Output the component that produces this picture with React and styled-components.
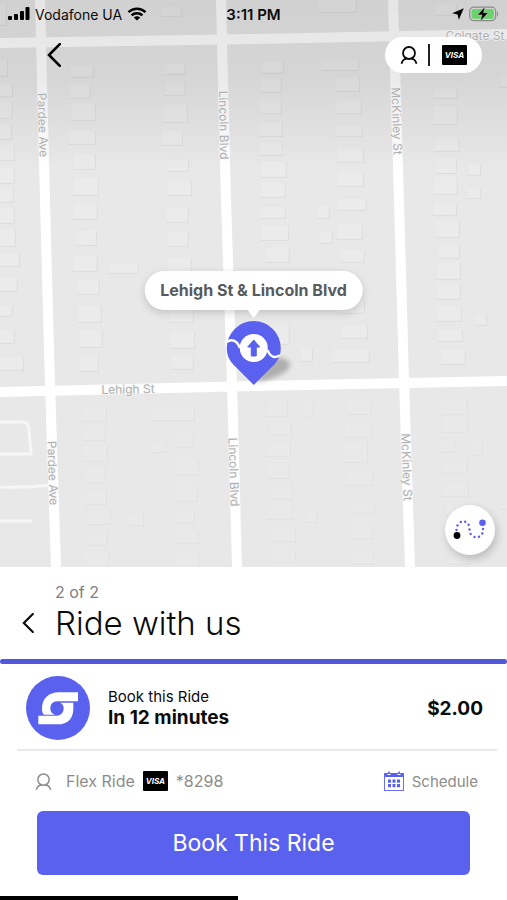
import React from 'react';
import styled, { createGlobalStyle } from 'styled-components';

const BLUE = '#5a61ee';

const roads = [
  'M40 0 L45 200 L50 385 L56 567',
  'M221 0 L226 200 L232 385 L237 567',
  'M393 0 L399 200 L404 380 L410 567',
  'M0 43 L254 39 L507 34',
  'M0 392 L254 386 L507 381',
];

const paths = [
  'M0 422 H22 Q29 422 29 430 L31 454 H0',
  'M0 487 Q25 488 50 485',
  'M0 521 H32',
];

// x, y, width, height
const buildings = [
  [-6, 4, 12, 21], [-8, 60, 15, 16], [-8, 84, 20, 12], [-8, 102, 20, 16], [-8, 124, 19, 15],
  [-8, 144, 22, 16], [-8, 168, 22, 15], [-8, 188, 21, 14], [-8, 208, 22, 15], [-8, 229, 23, 17],
  [-8, 253, 27, 13], [-8, 277, 25, 14], [-8, 305, 20, 11], [-8, 330, 22, 13], [-8, 357, 31, 13],
  [70, 65, 23, 12], [69, 84, 21, 14], [71, 103, 24, 17], [68, 130, 27, 14], [73, 153, 22, 16],
  [73, 178, 25, 17], [73, 204, 24, 15], [75, 230, 21, 15], [73, 255, 24, 16], [76, 280, 23, 14],
  [78, 305, 23, 17], [79, 330, 23, 17], [80, 356, 18, 15], [108, 264, 30, 9],
  [163, 64, 22, 10], [165, 81, 20, 14], [163, 104, 24, 18], [162, 130, 20, 15], [167, 159, 21, 12],
  [168, 180, 23, 15], [166, 207, 22, 15], [168, 231, 20, 15], [167, 258, 24, 14], [169, 305, 24, 17],
  [170, 331, 24, 17], [171, 355, 22, 14],
  [82, 406, 24, 15], [83, 425, 22, 15], [83, 445, 24, 16], [84, 466, 21, 17], [84, 490, 22, 14],
  [86, 510, 24, 14], [86, 532, 21, 13], [82, 552, 26, 16], [127, 514, 16, 11],
  [150, 406, 44, 14], [151, 442, 15, 10], [173, 433, 20, 14], [175, 459, 23, 16], [176, 485, 21, 16],
  [174, 508, 20, 15], [176, 531, 22, 12], [176, 551, 22, 16],
  [161, 6, 20, 10], [261, 61, 22, 12], [260, 78, 21, 14], [259, 99, 22, 14], [259, 122, 23, 14],
  [259, 142, 23, 13], [260, 161, 26, 16], [260, 182, 25, 15], [259, 206, 26, 12], [261, 225, 27, 15],
  [265, 247, 24, 15], [264, 324, 25, 20], [300, 347, 12, 14],
  [318, -2, 38, 14], [322, 60, 36, 10], [335, 77, 24, 14], [336, 98, 25, 15], [335, 125, 27, 11],
  [337, 147, 26, 15], [338, 172, 25, 14], [338, 198, 28, 12], [337, 223, 25, 16], [340, 250, 24, 12],
  [340, 300, 24, 13], [341, 325, 26, 13], [331, 349, 38, 13], [317, 205, 12, 13], [319, 231, 13, 12],
  [433, 88, 24, 10], [433, 106, 24, 18], [434, 138, 25, 13], [435, 158, 21, 15], [434, 176, 23, 18],
  [433, 203, 23, 12], [435, 220, 24, 17], [438, 244, 21, 14], [436, 262, 24, 17], [436, 284, 24, 15],
  [436, 306, 25, 15], [438, 329, 24, 12], [441, 349, 24, 15], [468, 163, 12, 12], [467, 188, 13, 10],
  [475, 314, 11, 11], [434, 3, 22, 12], [500, 74, 12, 13],
  [266, 401, 21, 15], [269, 421, 22, 14], [266, 442, 24, 14], [267, 463, 22, 15], [270, 484, 22, 15],
  [267, 505, 25, 14], [270, 528, 25, 13], [272, 549, 23, 13], [302, 403, 11, 14], [306, 512, 10, 10],
  [347, 400, 24, 14], [345, 424, 26, 13], [342, 442, 25, 20], [346, 472, 26, 13], [350, 500, 24, 13],
  [350, 525, 22, 13], [351, 550, 22, 14],
  [440, 398, 27, 16], [443, 416, 24, 16], [440, 439, 14, 13], [469, 443, 13, 12], [441, 460, 26, 13],
  [442, 482, 26, 14], [445, 502, 9, 14], [499, 500, 10, 9], [448, 550, 20, 14],
];

const streetLabels = [
  { name: 'Pardee Ave', x: 43, y: 125, angle: 88 },
  { name: 'Lincoln Blvd', x: 224, y: 125, angle: 89 },
  { name: 'McKinley St', x: 397, y: 121, angle: 88 },
  { name: 'Pardee Ave', x: 53, y: 473, angle: 88 },
  { name: 'Lincoln Blvd', x: 234, y: 472, angle: 88 },
  { name: 'McKinley St', x: 407, y: 467, angle: 88 },
  { name: 'Lehigh St', x: 128, y: 389, angle: -1 },
  { name: 'Colgate St', x: 475, y: 35, angle: 0 },
];

const GlobalStyle = createGlobalStyle`
  * {
    box-sizing: border-box;
  }
  body {
    margin: 0;
    background: #fff;
    color: #0b0b0b;
    font-family: Inter, 'Liberation Sans', sans-serif;
  }
  button {
    border: 0;
    padding: 0;
    background: none;
    color: inherit;
    font: inherit;
    cursor: pointer;
  }
  svg {
    display: block;
  }
`;

const StreetMap = () => (
  <MapDrawing viewBox="0 0 507 567" preserveAspectRatio="xMidYMid slice">
    <defs>
      <linearGradient id="shade" x1="0" y1="0" x2="0" y2="1">
        <stop offset="0" stopColor="#000" stopOpacity="0.1" />
        <stop offset="0.45" stopColor="#000" stopOpacity="0.08" />
        <stop offset="1" stopColor="#000" stopOpacity="0" />
      </linearGradient>
    </defs>
    <rect width="507" height="567" fill="#e8e8e8" />
    {buildings.map(([x, y, width, height]) => (
      <g key={`${x}-${y}`} opacity={y > 390 ? 0.55 : 1}>
        <rect x={x} y={y + 1} width={width + 1} height={height} fill="#dcdcdc" />
        <rect x={x} y={y} width={width} height={height} fill="#ebebeb" stroke="#e3e3e3" strokeWidth="0.5" />
      </g>
    ))}
    <g fill="none" stroke="#f6f6f6" strokeWidth="3">
      {paths.map((d) => (
        <path key={d} d={d} />
      ))}
    </g>
    <g fill="none" stroke="#fff" strokeWidth="10">
      {roads.map((d) => (
        <path key={d} d={d} />
      ))}
    </g>
    <rect width="507" height="170" fill="url(#shade)" />
    {streetLabels.map(({ name, x, y, angle }) => (
      <StreetName key={`${name}-${y}`} x={x} y={y} transform={`rotate(${angle} ${x} ${y})`}>
        {name}
      </StreetName>
    ))}
  </MapDrawing>
);

const SignalIcon = () => (
  <svg width="22" height="14" viewBox="0 0 22 14">
    <rect x="0" y="9" width="4" height="4" rx="1" />
    <rect x="6" y="7" width="4" height="6" rx="1" />
    <rect x="12" y="4" width="4" height="9" rx="1" />
    <rect x="17.500" y="0" width="4" height="13" rx="1" />
  </svg>
);

const WifiIcon = () => (
  <svg width="20" height="14" viewBox="0 0 20 14">
    <g fill="none" stroke="#000" strokeWidth="2.500">
      <path d="M1.500 5.200 C6.300 0.600 13.700 0.600 18.500 5.200" />
      <path d="M4.600 8.300 C7.600 5.500 12.400 5.500 15.400 8.300" />
    </g>
    <path d="M6.800 10.400 C8.600 8.900 11.400 8.900 13.200 10.400 L10 13.600 Z" />
  </svg>
);

const BatteryIcon = () => (
  <svg width="30" height="16" viewBox="0 0 30 16">
    <rect x="0.700" y="1.200" width="26" height="13.400" rx="4" fill="none" stroke="#8b8b8b" strokeWidth="1.200" />
    <path d="M28 5.500 Q30.500 8 28 10.500 Z" fill="#8b8b8b" />
    <rect x="2.600" y="3" width="22.200" height="9.800" rx="2.400" fill="#69d26b" />
    <path d="M16 0.500 L8.500 9 H13 L11.200 15.600 L19.200 6.700 H14.600 Z" stroke="#d9d9d9" strokeWidth="0.500" />
  </svg>
);

const ChevronIcon = ({ width, height }) => (
  <svg width={width} height={height} viewBox="0 0 14 24" fill="none" stroke="currentColor" strokeWidth="2.600">
    <path d="M12.800 1.200 L2 12 L12.800 22.800" strokeLinecap="round" />
  </svg>
);

const PersonIcon = ({ size, stroke }) => (
  <svg width={size} height={size} viewBox="0 0 18 18" fill="none" stroke="currentColor" strokeWidth={stroke}>
    <circle cx="9" cy="7" r="6" />
    <path d="M1.500 17.800 C2.200 14.800 4.200 13 6.700 12.700 M11.300 12.700 C13.800 13 15.800 14.800 16.500 17.800" />
  </svg>
);

const PinIcon = () => (
  <svg width="84" height="66" viewBox="0 0 84 66">
    <defs>
      <filter id="soft" x="-30%" y="-30%" width="160%" height="160%">
        <feGaussianBlur stdDeviation="2.600" />
      </filter>
    </defs>
    <path d="M43 63 C54 61 76 54 78 46 C79 40 70 36 62 38 Z" fill="#000" opacity="0.25" filter="url(#soft)" />
    <path d="M42 65 L22 45 C17 40 15 34 15 28 A27 27 0 0 1 69 28 C69 34 67 40 62 45 Z" fill={BLUE} />
    <path
      d="M15 22 C20 18 26 21 28 28 M56 30 C58 37 64 39 68 35"
      fill="none"
      stroke="#fff"
      strokeWidth="2.400"
    />
    <circle cx="42" cy="28" r="14" fill="#fff" />
    <path d="M42 20 L48 27 H44.500 V36 H39.500 V27 H36 Z" fill={BLUE} stroke={BLUE} strokeLinejoin="round" />
  </svg>
);

const RouteIcon = () => (
  <svg width="34" height="24" viewBox="0 0 34 24">
    <g fill={BLUE}>
      <circle cx="3.500" cy="12" r="1.200" />
      <circle cx="4.500" cy="7.500" r="1.200" />
      <circle cx="7.800" cy="4" r="1.200" />
      <circle cx="12.200" cy="3.800" r="1.200" />
      <circle cx="15.600" cy="6.800" r="1.200" />
      <circle cx="16.500" cy="11.500" r="1.200" />
      <circle cx="17.600" cy="16" r="1.200" />
      <circle cx="21.500" cy="19" r="1.200" />
      <circle cx="26" cy="18.800" r="1.200" />
      <circle cx="29.300" cy="15.500" r="1.200" />
      <circle cx="30" cy="11" r="1.200" />
      <circle cx="29.500" cy="4.800" r="3.300" />
    </g>
    <circle cx="4" cy="17.500" r="3.400" />
  </svg>
);

const BrandIcon = () => (
  <svg width="64" height="64" viewBox="0 0 192 192">
    <circle cx="96" cy="96" r="96" fill={BLUE} />
    <g fill="#fff">
      <path d="M156 49 H98 C68 49 48 68 48 98 C48 106 50 112 54 116 H88 C80 116 73 108 73 97 C73 86 80 76 94 76 H156 Z" />
      <path d="M37 119 H92 C106 119 113 108 113 97 C113 86 106 80 98 80 H142 V98 C142 127 125 145 96 145 H37 Z" />
    </g>
  </svg>
);

const CalendarIcon = () => (
  <svg width="20" height="20" viewBox="0 0 20 20" fill={BLUE}>
    <path d="M0.500 2 H3.500 V4 H6.500 V2 H13.500 V4 H16.500 V2 H19.500 V6 H0.500 Z" />
    <path d="M4.200 0.500 H5.800 V3 H4.200 Z M14.200 0.500 H15.800 V3 H14.200 Z" />
    <rect x="0.500" y="2.500" width="19" height="17" fill="none" stroke={BLUE} strokeWidth="0.900" />
    {[8.5, 13].map((y) =>
      [4, 8.5, 13].map((x) => (
        <rect key={`${x}-${y}`} x={x} y={y} width="3" height="3.200" />
      ))
    )}
  </svg>
);

const App = () => {
  return (
    <Screen>
      <GlobalStyle />
      <MapPanel>
        <StreetMap />
        <StatusBar>
          <StatusGroup>
            <SignalIcon />
            <span>Vodafone UA</span>
            <WifiIcon />
          </StatusGroup>
          <Clock>3:11 PM</Clock>
          <StatusGroup $end>
            <svg width="12" height="12" viewBox="0 0 12 12">
              <path d="M11.800 0.200 L6.800 11.800 L5.600 6.400 L0.200 5.200 Z" />
            </svg>
            <BatteryIcon />
          </StatusGroup>
        </StatusBar>
        <MapNav>
          <BackButton aria-label="Back">
            <ChevronIcon width={14} height={24} />
          </BackButton>
          <ProfileButton aria-label="Profile and payment">
            <PersonIcon size={18} stroke={1.8} />
            <PillDivider />
            <VisaCard>VISA</VisaCard>
          </ProfileButton>
        </MapNav>
        <Marker>
          <Callout>Lehigh St &amp; Lincoln Blvd</Callout>
          <PinIcon />
        </Marker>
        <RouteButton aria-label="Show route">
          <RouteIcon />
        </RouteButton>
      </MapPanel>
      <Sheet>
        <SheetHeader>
          <Step>2 of 2</Step>
          <PreviousButton aria-label="Previous step">
            <ChevronIcon width={12} height={20} />
          </PreviousButton>
          <Title>Ride with us</Title>
        </SheetHeader>
        <Progress />
        <RideOption>
          <BrandIcon />
          <RideInfo>
            <RideLabel>Book this Ride</RideLabel>
            <RideTime>In 12 minutes</RideTime>
          </RideInfo>
          <Price>$2.00</Price>
        </RideOption>
        <Details>
          <DetailButton>
            <PersonIcon size={17} stroke={1.6} />
            <DetailName>Flex Ride</DetailName>
            <VisaCard>VISA</VisaCard>
            <span>*8298</span>
          </DetailButton>
          <DetailButton $compact>
            <CalendarIcon />
            <span>Schedule</span>
          </DetailButton>
        </Details>
        <BookButton>Book This Ride</BookButton>
        <LoadBar />
      </Sheet>
    </Screen>
  );
};

export default App;

const Screen = styled.div`
  display: flex;
  flex-direction: column;
  min-height: 100vh;
`;

const MapPanel = styled.section`
  position: relative;
  flex: 1;
  display: flex;
  flex-direction: column;
  min-height: 420px;
  overflow: hidden;
`;

const MapDrawing = styled.svg`
  position: absolute;
  inset: 0;
  width: 100%;
  height: 100%;
`;

const StreetName = styled.text`
  font-size: 12px;
  fill: #b0b0b0;
  stroke: #f4f4f4;
  stroke-width: 2px;
  stroke-opacity: 0.6;
  paint-order: stroke;
  text-anchor: middle;
  dominant-baseline: central;
`;

const StatusBar = styled.header`
  position: relative;
  display: grid;
  grid-template-columns: 1fr auto 1fr;
  align-items: center;
  height: 28px;
  padding: 0 8px;
  font-size: 14px;
`;

const StatusGroup = styled.div`
  display: flex;
  align-items: center;
  justify-content: ${(props) => (props.$end ? 'flex-end' : 'flex-start')};
  gap: 5px;
`;

const Clock = styled.span`
  font-size: 15px;
  font-weight: 600;
`;

const MapNav = styled.nav`
  position: relative;
  display: flex;
  align-items: center;
  justify-content: space-between;
  margin-top: 9px;
  padding: 0 25px 0 47px;
`;

const BackButton = styled.button`
  color: #000;
`;

const ProfileButton = styled.button`
  display: flex;
  align-items: center;
  height: 36px;
  padding: 0 15px;
  border-radius: 18px;
  background: #fff;
`;

const PillDivider = styled.span`
  width: 2px;
  height: 22px;
  margin: 0 12px 0 10px;
  background: #222;
`;

const VisaCard = styled.span`
  display: inline-flex;
  align-items: center;
  justify-content: center;
  width: 25px;
  height: 20px;
  border-radius: 1px;
  background: #000;
  color: #fff;
  font-size: 8px;
  font-style: italic;
  font-weight: 700;
`;

const Marker = styled.div`
  position: absolute;
  top: 68%;
  left: 50%;
  display: flex;
  flex-direction: column;
  align-items: center;
  gap: 10px;
  transform: translate(-50%, -100%);
`;

const Callout = styled.div`
  position: relative;
  padding: 0 16px;
  border-radius: 20px;
  background: #fff;
  box-shadow: 0 3px 8px rgba(0, 0, 0, 0.16);
  color: #555b5e;
  font-size: 16px;
  font-weight: 700;
  line-height: 39px;
  white-space: nowrap;

  &::after {
    content: '';
    position: absolute;
    top: 100%;
    left: 50%;
    border: 6px solid transparent;
    border-top: 8px solid #fff;
    border-bottom: 0;
    transform: translateX(-50%);
  }
`;

const RouteButton = styled.button`
  position: absolute;
  right: 12px;
  bottom: 12px;
  display: flex;
  align-items: center;
  justify-content: center;
  width: 50px;
  height: 50px;
  border-radius: 50%;
  background: #fff;
  box-shadow: 2px 4px 8px rgba(0, 0, 0, 0.2);
`;

const Sheet = styled.main`
  display: flex;
  flex-direction: column;
  background: #fff;
`;

const SheetHeader = styled.div`
  display: grid;
  grid-template-columns: 33px 1fr;
  align-items: center;
  padding: 15px 22px;
`;

const Step = styled.span`
  grid-column: 2;
  color: #808080;
  font-size: 16px;
  line-height: 20px;
`;

const PreviousButton = styled.button`
  justify-self: start;
`;

const Title = styled.h1`
  margin: 0;
  font-size: 33px;
  font-weight: 300;
  line-height: 42px;
`;

const Progress = styled.div`
  height: 5px;
  border-radius: 3px;
  background: #5157dc;
`;

const RideOption = styled.div`
  display: flex;
  align-items: center;
  margin: 0 10px 0 17px;
  padding: 12px 14px 9px 9px;
  border-bottom: 2px solid #e9e9e9;
`;

const RideInfo = styled.div`
  display: flex;
  flex: 1;
  flex-direction: column;
  margin-left: 18px;
`;

const RideLabel = styled.span`
  font-size: 15px;
  line-height: 20px;
`;

const RideTime = styled.strong`
  font-size: 19px;
  font-weight: 700;
  line-height: 22px;
`;

const Price = styled.strong`
  font-size: 19px;
  font-weight: 700;
`;

const Details = styled.div`
  display: flex;
  align-items: center;
  justify-content: space-between;
  height: 60px;
  padding: 0 29px 0 35px;
`;

const DetailButton = styled.button`
  display: flex;
  align-items: center;
  gap: 8px;
  color: #8c8c8c;
  font-size: ${(props) => (props.$compact ? '15px' : '16px')};
`;

const DetailName = styled.span`
  margin-left: 6px;
`;

const BookButton = styled.button`
  height: 64px;
  margin: 0 37px 21px;
  border-radius: 6px;
  background: ${BLUE};
  color: #fff;
  font-size: 23px;
`;

const LoadBar = styled.div`
  width: 47%;
  height: 4px;
  background: #000;
`;
